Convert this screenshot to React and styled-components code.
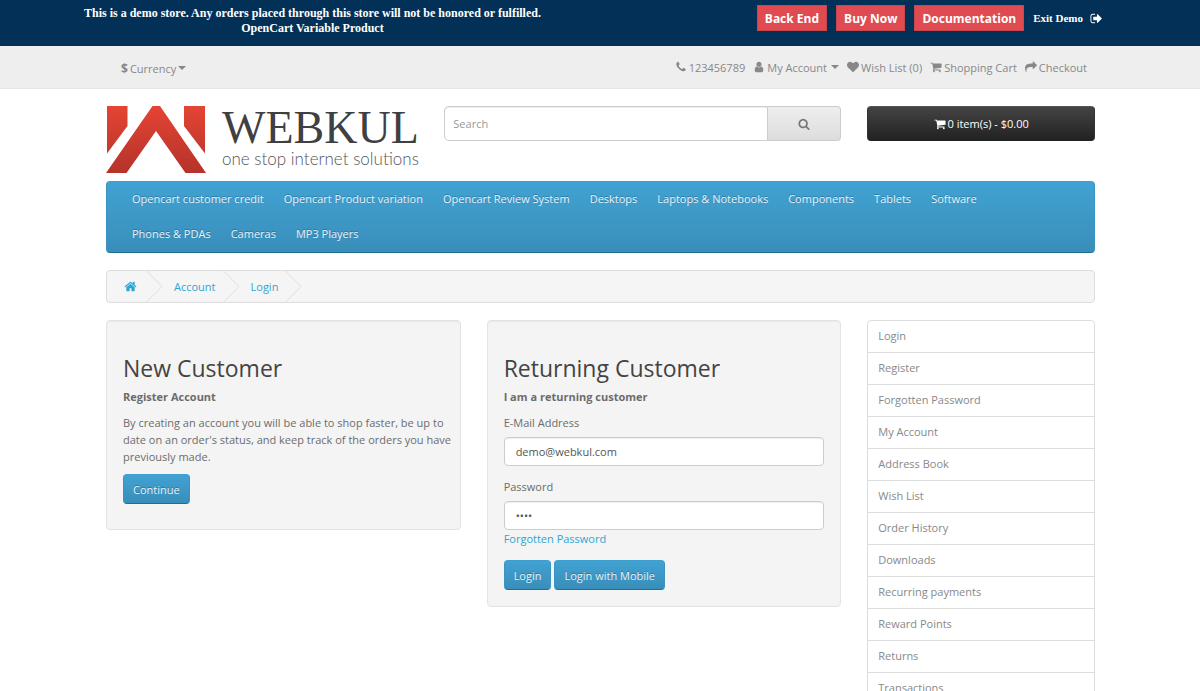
import React from "react";
import styled, { createGlobalStyle } from "styled-components";

const GlobalStyle = createGlobalStyle`
* {
    box-sizing: border-box;
}
body {
    margin: 0;
    background: #fff;
    color: #6c6c6c;
    font-family: 'Open Sans', 'Noto Sans', sans-serif;
    font-size: 11px;
    line-height: 17px;
}
a {
    color: #2fa5d3;
    text-decoration: none;
}
p, h2, ul, ol {
    margin: 0;
    padding: 0;
}
ul, ol {
    list-style: none;
}
button, input {
    font-family: inherit;
    font-size: 11px;
    line-height: 17px;
}
`

const icons = {
    phone: "M1600 1240q0 27-10 70.5t-21 68.5q-21 50-122 106-94 51-186 51-27 0-53-3.5t-57.5-12.5-47-14.5-55.5-20.5-49-18q-98-35-175-83-127-79-264-216t-216-264q-48-77-83-175-3-9-18-49t-20.5-55.5-14.5-47-12.5-57.5-3.5-53q0-92 51-186 56-101 106-122 25-11 68.5-21t70.5-10q14 0 21 3 18 6 53 76 11 19 30 54t35 63.5 31 53.5q3 4 17.5 25t21.5 35.5 7 28.5q0 20-28.5 50t-62 55-62 53-28.5 46q0 9 5 22.5t8.5 20.5 14 24 11.5 19q76 137 174 235t235 174q2 1 19 11.5t24 14 20.5 8.5 22.5 5q18 0 46-28.5t53-62 55-62 50-28.5q14 0 28.5 7t35.5 21.5 25 17.5q25 15 53.5 31t63.5 35 54 30q70 35 76 53 3 7 3 21z",
    user: "M1536 1399q0 109-62.5 187t-150.5 78h-854q-88 0-150.5-78t-62.5-187q0-85 8.5-160.5t31.5-152 58.5-131 94-89 134.5-34.5q131 128 313 128t313-128q76 0 134.5 34.5t94 89 58.5 131 31.5 152 8.5 160.5zm-256-887q0 159-112.5 271.5t-271.5 112.5-271.5-112.5-112.5-271.5 112.5-271.5 271.5-112.5 271.5 112.5 112.5 271.5z",
    heart: "M896 1664q-26 0-44-18l-624-602q-10-8-27.5-26t-55.5-65.5-68-97.5-53.5-121-23.5-138q0-220 127-344t351-124q62 0 126.5 21.5t120 58 95.5 68.5 76 68q36-36 76-68t95.5-68.5 120-58 126.5-21.5q224 0 351 124t127 344q0 221-229 450l-623 600q-18 18-44 18z",
    cart: "M704 1536q0 52-38 90t-90 38-90-38-38-90 38-90 90-38 90 38 38 90zm896 0q0 52-38 90t-90 38-90-38-38-90 38-90 90-38 90 38 38 90zm128-1088v512q0 24-16.5 42.5t-40.5 21.5l-1044 122q13 60 13 70 0 16-24 64h920q26 0 45 19t19 45-19 45-45 19h-1024q-26 0-45-19t-19-45q0-11 8-31.5t16-36 21.5-40 15.5-29.5l-177-823h-204q-26 0-45-19t-19-45 19-45 45-19h256q16 0 28.5 6.5t19.5 15.5 13 24.5 8 26 5.5 29.5 4.5 26h1201q26 0 45 19t19 45z",
    share: "M1792 640q0 26-19 45l-512 512q-19 19-45 19t-45-19-19-45v-256h-224q-98 0-175.5 6t-154 21.5-133 42.5-105.5 69.5-80 101-48.5 138.5-17.5 181q0 55 5 123 0 6 2.5 23.5t2.5 26.5q0 15-8.5 25t-23.5 10q-16 0-28-17-7-9-13-22t-13.5-30-10.5-24q-127-285-127-451 0-199 53-333 162-403 875-403h224v-256q0-26 19-45t45-19 45 19l512 512q19 19 19 45z",
    search: "M1216 832q0-185-131.5-316.5t-316.5-131.5-316.5 131.5-131.5 316.5 131.5 316.5 316.5 131.5 316.5-131.5 131.5-316.5zm512 832q0 52-38 90t-90 38q-54 0-90-38l-343-342q-179 124-399 124-143 0-273.5-55.5t-225-150-150-225-55.5-273.5 55.5-273.5 150-225 225-150 273.5-55.5 273.5 55.5 225 150 150 225 55.5 273.5q0 220-124 399l343 343q37 37 37 90z",
    home: "M1472 992v480q0 26-19 45t-45 19h-384v-384h-256v384h-384q-26 0-45-19t-19-45v-480q0-1 .5-3t.5-3l575-474 575 474q1 2 1 6zm223-69l-62 74q-8 9-21 11h-3q-13 0-21-7l-692-577-692 577q-12 8-24 7-13-2-21-11l-62-74q-8-10-7-23.5t11-21.5l719-599q32-26 76-26t76 26l244 204v-195q0-14 9-23t23-9h192q14 0 23 9t9 23v408l219 182q10 8 11 21.5t-7 23.5z",
    signout: "M704 1440q0 4 1 20t.5 26.5-3 23.5-10 19.5-20.5 6.5h-320q-119 0-203.5-84.5t-84.5-203.5v-704q0-119 84.5-203.5t203.5-84.5h320q13 0 22.5 9.5t9.5 22.5q0 4 1 20t.5 26.5-3 23.5-10 19.5-20.5 6.5h-320q-66 0-113 47t-47 113v704q0 66 47 113t113 47h312l11.5 1 11.5 3 8 5.5 7 9 2 13.5zm928-544q0 26-19 45l-544 544q-19 19-45 19t-45-19-19-45v-288h-448q-26 0-45-19t-19-45v-384q0-26 19-45t45-19h448v-288q0-26 19-45t45-19 45 19l544 544q19 19 19 45z",
}

const Svg = styled.svg`
flex: none;
width: ${props => props.$size}px;
height: ${props => props.$size}px;
fill: currentColor;
`

function Icon({ name, size = 12 }) {
    return (
        <Svg $size={size} viewBox="0 0 1792 1792" aria-hidden="true">
            <path d={icons[name]} />
        </Svg>
    );
}

const Caret = styled.span`
border-top: 4px solid currentColor;
border-left: 4px solid transparent;
border-right: 4px solid transparent;
margin-left: ${props => props.$gap || 0}px;
`

/* demo bar */
const DemoBar = styled.div`
display: flex;
justify-content: space-between;
align-items: flex-start;
height: 46px;
padding: 5px 97px 0 84px;
background: #033056;
color: #fff;
font-family: 'Liberation Serif', serif;
font-weight: bold;
`
const DemoText = styled.p`
padding-top: 1px;
font-size: 12px;
line-height: 15px;
text-align: center;
`
const DemoActions = styled.div`
display: flex;
align-items: center;
gap: 9px;
`
const DemoButton = styled.button`
height: 26px;
padding: 0 7px;
border: 1px solid #c9454f;
background: #e04b51;
color: #fff;
font-family: 'Open Sans', sans-serif;
font-size: 12px;
font-weight: bold;
`
const ExitLink = styled.a`
display: flex;
align-items: center;
gap: 7px;
color: #fff;
font-size: 11px;
`

/* top bar */
const TopBar = styled.nav`
background: #eee;
border-bottom: 1px solid #e5e5e5;
`
const Container = styled.div`
padding: 0 105px 0 106px;
`
const TopInner = styled(Container)`
display: flex;
justify-content: space-between;
height: 42px;
`
const CurrencyButton = styled.button`
display: flex;
align-items: center;
gap: 2px;
height: 44px;
padding: 0 15px;
border: 0;
background: none;
color: #888;
strong {
    font-size: 12px;
}
`
const TopLinks = styled.ul`
display: flex;
align-items: center;
gap: 8px;
padding-right: 8px;
`
const TopLink = styled.a`
display: flex;
align-items: center;
gap: 2px;
color: #888;
`

/* header */
const Grid = styled.div`
display: grid;
grid-template-columns: repeat(12, minmax(0, 1fr));
column-gap: 26px;
align-items: start;
`
const Header = styled(Grid)`
padding: 17px 0 8px;
`
const Col = styled.div`
grid-column: span ${props => props.$span};
`
const Logo = styled.a`
display: flex;
gap: 16px;
height: 67px;
`
const Mark = styled.svg`
flex: none;
width: 100px;
height: 67px;
`
const LogoText = styled.span`
display: flex;
flex-direction: column;
`
const LogoName = styled.span`
color: #3f4041;
font-family: 'Liberation Serif', serif;
font-size: 46px;
line-height: 44px;
`
const LogoTag = styled.span`
color: #555;
font-family: Lato, sans-serif;
font-size: 17px;
font-weight: 300;
line-height: 18px;
white-space: nowrap;
`
const SearchBox = styled.form`
display: flex;
height: 35px;
`
const SearchInput = styled.input`
flex: 1;
min-width: 0;
padding: 0 8px;
border: 1px solid #ccc;
border-radius: 5px 0 0 5px;
box-shadow: inset 0 1px 1px rgba(0, 0, 0, 0.075);
color: #555;
&::placeholder {
    color: #999;
}
`
const SearchButton = styled.button`
display: flex;
align-items: center;
justify-content: center;
width: 73px;
border: 1px solid #ccc;
border-left: 0;
border-radius: 0 4px 4px 0;
background: linear-gradient(#eee, #ddd);
color: #777;
`
const CartButton = styled.button`
display: flex;
align-items: center;
justify-content: center;
gap: 2px;
width: 100%;
height: 35px;
border: 1px solid #333;
border-color: #555 #333 #222;
border-radius: 4px;
background: linear-gradient(#444, #222);
color: #fff;
`

/* menu */
const Menu = styled.nav`
padding: 0 15px;
border: 1px solid;
border-color: #3d9fcf #3a93c0 #1f6f93;
border-radius: 4px;
background: linear-gradient(#41a2d3, #398eb9);
`
const MenuList = styled.ul`
display: flex;
flex-wrap: wrap;
`
const MenuLink = styled.a`
display: block;
padding: 8px 10px 10px;
color: #e6f3fa;
text-shadow: 0 -1px 0 rgba(0, 0, 0, 0.25);
`

/* breadcrumb */
const Breadcrumb = styled.ol`
display: flex;
height: 33px;
margin: 17px 0;
border: 1px solid #ddd;
border-radius: 4px;
background: #f5f5f5;
overflow: hidden;
`
const Crumb = styled.li`
display: flex;
align-items: center;
a {
    display: flex;
    padding: ${props => props.$first ? "0 9px 0 17px" : "0 7px 0 11px"};
}
`
const Chevron = styled.svg`
width: 17px;
height: 31px;
fill: none;
stroke: #ddd;
`

/* account */
const Forms = styled.main`
grid-column: span 9;
display: grid;
grid-template-columns: 1fr 1fr;
gap: 26px;
align-items: start;
`
const Well = styled.section`
padding: 16px 16px ${props => props.$bottom || 16}px;
border: 1px solid #e3e3e3;
border-radius: 4px;
background: #f4f4f4;
box-shadow: inset 0 1px 1px rgba(0, 0, 0, 0.05);
`
const Title = styled.h2`
margin: 17px 0 6px;
color: #444;
font-size: 23px;
font-weight: normal;
line-height: 28px;
`
const Text = styled.p`
margin: 0 -10px 9px 0;
`
const Label = styled.label`
display: block;
margin-bottom: 6px;
`
const Field = styled.div`
margin-bottom: 12px;
`
const Input = styled.input`
display: block;
width: 100%;
height: 29px;
padding: 0 11px;
border: 1px solid #ccc;
border-radius: 4px;
background: #fff;
box-shadow: inset 0 1px 1px rgba(0, 0, 0, 0.075);
color: #555;
`
const Buttons = styled.div`
display: flex;
gap: 3px;
padding-top: 1px;
`
const Button = styled.button`
height: 30px;
padding: 0 9px;
border: 1px solid;
border-color: #3d9fcf #3a93c0 #1f6f93;
border-radius: 4px;
background: linear-gradient(#41a2d3, #398eb9);
color: #e6f3fa;
text-shadow: 0 -1px 0 rgba(0, 0, 0, 0.25);
`
const Sidebar = styled.aside`
grid-column: span 3;
border: 1px solid #ddd;
border-radius: 4px;
`
const SideLink = styled.a`
display: block;
height: 32px;
padding: 6px 10px;
border-bottom: 1px solid #ddd;
color: #888;
`

const menu = ["Opencart customer credit", "Opencart Product variation", "Opencart Review System", "Desktops", "Laptops & Notebooks", "Components", "Tablets", "Software", "Phones & PDAs", "Cameras", "MP3 Players"];

const sideLinks = ["Login", "Register", "Forgotten Password", "My Account", "Address Book", "Wish List", "Order History", "Downloads", "Recurring payments", "Reward Points", "Returns", "Transactions", "Newsletter"];

const topLinks = [
    { icon: "phone", text: "123456789" },
    { icon: "user", text: "My Account", caret: true },
    { icon: "heart", text: "Wish List (0)" },
    { icon: "cart", text: "Shopping Cart" },
    { icon: "share", text: "Checkout" },
];

function LogoMark() {
    return (
        <Mark viewBox="0 0 100 67" aria-hidden="true">
            <defs>
                <linearGradient id="mark" x1="0" y1="0" x2="0" y2="67" gradientUnits="userSpaceOnUse">
                    <stop offset="0" stopColor="#e44434" />
                    <stop offset="1" stopColor="#b5332a" />
                </linearGradient>
            </defs>
            <g fill="url(#mark)">
                <path d="M1 0H21.5V20L1 47.5z" />
                <path d="M78 0H99V47.5L78 20z" />
                <path d="M46.5 0H54L100 67H79.500L50 25 20.500 67H0z" />
            </g>
        </Mark>
    );
}

function CrumbItem({ first, children }) {
    return (
        <Crumb $first={first}>
            <a href="#" aria-label={first ? "Home" : undefined}>{children}</a>
            <Chevron viewBox="0 0 17 31"><path d="M0.500 0L16 15.500 0.500 31" /></Chevron>
        </Crumb>
    );
}

function App() {
    return (
        <>
            <GlobalStyle />
            <DemoBar>
                <DemoText>
                    This is a demo store. Any orders placed through this store will not be honored or fulfilled.
                    <br />
                    OpenCart Variable Product
                </DemoText>
                <DemoActions>
                    <DemoButton>Back End</DemoButton>
                    <DemoButton>Buy Now</DemoButton>
                    <DemoButton>Documentation</DemoButton>
                    <ExitLink href="#">Exit Demo <Icon name="signout" size={13} /></ExitLink>
                </DemoActions>
            </DemoBar>

            <TopBar>
                <TopInner>
                    <CurrencyButton><strong>$</strong> Currency<Caret /></CurrencyButton>
                    <TopLinks>
                        {topLinks.map(link => (
                            <li key={link.text}>
                                <TopLink href="#">
                                    <Icon name={link.icon} />
                                    {link.text}
                                    {link.caret && <Caret $gap={2} />}
                                </TopLink>
                            </li>
                        ))}
                    </TopLinks>
                </TopInner>
            </TopBar>

            <Container>
                <Header as="header">
                    <Col $span={4}>
                        <Logo href="#">
                            <LogoMark />
                            <LogoText>
                                <LogoName>WEBKUL</LogoName>
                                <LogoTag>one stop internet solutions</LogoTag>
                            </LogoText>
                        </Logo>
                    </Col>
                    <Col $span={5}>
                        <SearchBox>
                            <SearchInput type="text" placeholder="Search" aria-label="Search" />
                            <SearchButton type="button" aria-label="Submit search"><Icon name="search" size={12} /></SearchButton>
                        </SearchBox>
                    </Col>
                    <Col $span={3}>
                        <CartButton><Icon name="cart" /> 0 item(s) - $0.00</CartButton>
                    </Col>
                </Header>

                <Menu>
                    <MenuList>
                        {menu.map(item => (
                            <li key={item}><MenuLink href="#">{item}</MenuLink></li>
                        ))}
                    </MenuList>
                </Menu>

                <Breadcrumb>
                    <CrumbItem first><Icon name="home" size={13} /></CrumbItem>
                    <CrumbItem>Account</CrumbItem>
                    <CrumbItem>Login</CrumbItem>
                </Breadcrumb>

                <Grid>
                    <Forms>
                        <Well $bottom={25}>
                            <Title>New Customer</Title>
                            <Text><strong>Register Account</strong></Text>
                            <Text>By creating an account you will be able to shop faster, be up to date on an order's status, and keep track of the orders you have previously made.</Text>
                            <Button>Continue</Button>
                        </Well>
                        <Well>
                            <Title>Returning Customer</Title>
                            <Text><strong>I am a returning customer</strong></Text>
                            <Field>
                                <Label htmlFor="email">E-Mail Address</Label>
                                <Input id="email" type="text" defaultValue="demo@webkul.com" />
                            </Field>
                            <Field>
                                <Label htmlFor="password">Password</Label>
                                <Input id="password" type="password" defaultValue="demo" />
                                <a href="#">Forgotten Password</a>
                            </Field>
                            <Buttons>
                                <Button>Login</Button>
                                <Button>Login with Mobile</Button>
                            </Buttons>
                        </Well>
                    </Forms>
                    <Sidebar>
                        {sideLinks.map(item => (
                            <SideLink href="#" key={item}>{item}</SideLink>
                        ))}
                    </Sidebar>
                </Grid>
            </Container>
        </>
    );
}

export default App;
